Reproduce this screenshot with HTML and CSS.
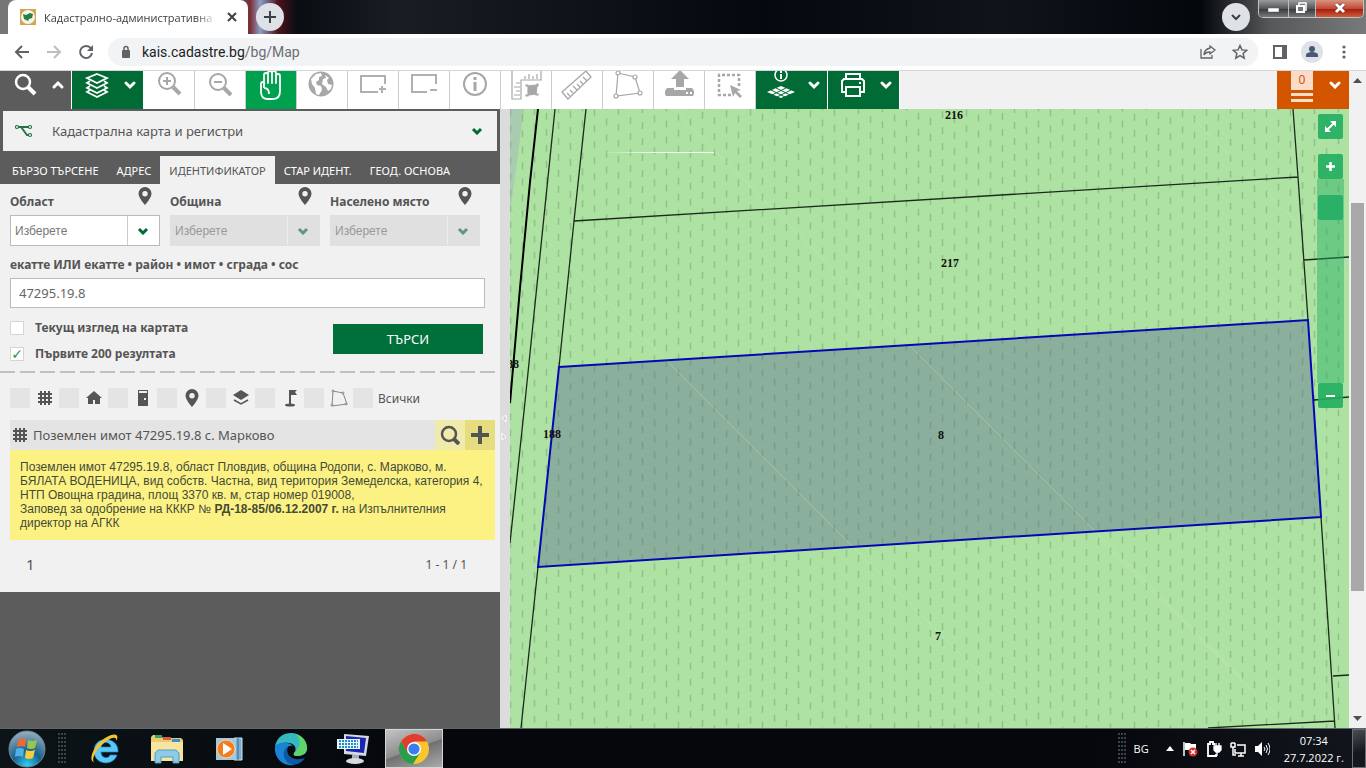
FILE: index.html
```html
<!DOCTYPE html>
<html lang="bg">
<head>
    <meta charset="UTF-8">
    <meta name="viewport" content="width=device-width, initial-scale=1.0">
    <title>Кадастрално-административна</title>
    <link rel="stylesheet" href="styles.css">
</head>
<body>
    <!-- browser tabs -->
    <div class="tab-strip">
        <div class="browser-tab">
            <svg width="16" height="16" viewBox="0 0 16 16"><rect width="16" height="16" fill="#d3a550"/><circle cx="8" cy="8" r="7" fill="#f4f3ea"/><path d="M3 5l3 1 4-2 3 1-1 4-3 1-1 2-4-2z" fill="#24813f"/></svg>
            <span class="tab-title">Кадастрално-административна</span>
            <button class="tab-close" aria-label="Затвори раздела"><svg width="10" height="10" viewBox="0 0 10 10"><path d="M1 1l8 8M9 1l-8 8" stroke="#3c4043" stroke-width="2"/></svg></button>
        </div>
        <button class="round-button" aria-label="Нов раздел"><svg width="14" height="14" viewBox="0 0 14 14"><path d="M7 1v12M1 7h12" stroke="#3c4043" stroke-width="2"/></svg></button>
        <button class="round-button tab-search" aria-label="Търсене в разделите"><svg width="12" height="12" viewBox="0 0 12 12"><path d="M2 4l4 4 4-4" fill="none" stroke="#3c4043" stroke-width="2"/></svg></button>
        <div class="window-controls">
            <button aria-label="Минимизиране"><svg width="29" height="17" viewBox="0 0 29 17"><rect x="9" y="8" width="11" height="4" fill="#fff" stroke="#555" stroke-width=".5"/></svg></button>
            <button aria-label="Възстановяване"><svg width="26" height="17" viewBox="0 0 26 17"><path d="M10 5V3h7v7h-2" fill="none" stroke="#fff" stroke-width="1.5"/><rect x="8" y="6" width="7" height="6" fill="#777" stroke="#fff" stroke-width="2"/></svg></button>
            <button class="window-close" aria-label="Затваряне"><svg width="47" height="17" viewBox="0 0 47 17"><path d="M20 4l8 8M28 4l-8 8" stroke="#622" stroke-width="4"/><path d="M20 4l8 8M28 4l-8 8" stroke="#fff" stroke-width="3"/></svg></button>
        </div>
    </div>

    <!-- address bar -->
    <div class="address-bar">
        <button class="nav-button" aria-label="Назад"><svg width="16" height="16" viewBox="0 0 16 16"><path d="M15 8H2M8 2L2 8l6 6" fill="none" stroke="#5f6368" stroke-width="2"/></svg></button>
        <button class="nav-button" aria-label="Напред"><svg width="16" height="16" viewBox="0 0 16 16"><path d="M1 8h13M8 2l6 6-6 6" fill="none" stroke="#bcbec1" stroke-width="2"/></svg></button>
        <button class="nav-button" aria-label="Презареждане"><svg width="16" height="16" viewBox="0 0 16 16"><path d="M13 4.500A6 6 0 1 0 14 9" fill="none" stroke="#5f6368" stroke-width="2"/><path d="M15 1v6H9z" fill="#5f6368"/></svg></button>
        <div class="omnibox">
            <svg width="12" height="14" viewBox="0 0 12 14"><rect x="2" y="5" width="8" height="8" rx="1" fill="#5f6368"/><path d="M4 6V3.500a2 2 0 0 1 4 0V6" fill="none" stroke="#5f6368" stroke-width="1.500"/></svg>
            <span class="url">kais.cadastre.bg<span class="url-path">/bg/Map</span></span>
            <button class="nav-button" aria-label="Споделяне"><svg width="16" height="16" viewBox="0 0 16 16"><path d="M1 5v9h11v-3M10 2l5 4-5 4V8c-3 0-5 1-6 3 0-4 2-6 6-7z" fill="none" stroke="#5f6368" stroke-width="1.300"/></svg></button>
            <button class="nav-button" aria-label="Отметка"><svg width="16" height="16" viewBox="0 0 16 16"><path d="M8 1.500l1.900 4.400 4.800.4-3.600 3.200 1.100 4.700L8 11.700l-4.200 2.500 1.100-4.700L1.300 6.300l4.800-.4z" fill="none" stroke="#5f6368" stroke-width="1.500"/></svg></button>
        </div>
        <button class="nav-button" aria-label="Страничен панел"><svg width="14" height="14" viewBox="0 0 14 14"><rect x="1" y="1" width="12" height="12" fill="#fff" stroke="#5f6368" stroke-width="2"/><rect x="9" y="1" width="4" height="12" fill="#5f6368"/></svg></button>
        <button class="nav-button" aria-label="Профил"><svg width="22" height="22" viewBox="0 0 22 22"><circle cx="11" cy="11" r="11" fill="#dee1e6"/><circle cx="11" cy="8" r="3" fill="#4a5878"/><path d="M5 16v-2c0-4 12-4 12 0v2z" fill="#4a5878"/></svg></button>
        <button class="nav-button" aria-label="Меню"><svg width="4" height="14" viewBox="0 0 4 14" fill="#5f6368"><circle cx="2" cy="2" r="1.600"/><circle cx="2" cy="7" r="1.600"/><circle cx="2" cy="12" r="1.600"/></svg></button>
    </div>

    <div class="page">
        <div class="app">
            <div class="toolbar">
                <button class="tool tool-search" aria-label="Търсене"><svg width="71" height="38" viewBox="0 0 71 38" fill="none" stroke="#fff"><circle cx="23" cy="11" r="7" stroke-width="2.500"/><path d="M28 16l7 7" stroke-width="4"/><path d="M54 16l4-4 4 4" stroke-width="3" stroke-linecap="round"/></svg></button>
                <button class="tool tool-green" aria-label="Слоеве"><svg width="71" height="38" viewBox="0 0 71 38" fill="none" stroke="#fff" stroke-width="1.800"><path d="M25 3l10 4-10 5-10-5z"/><path d="M18 10l-3 2 10 5 10-5-3-2M18 15l-3 2 10 5 10-5-3-2M18 19l-3 2 10 5 10-5-3-2"/><path d="M54 12l4 4 4-4" stroke-width="3" stroke-linecap="round"/></svg></button>
                <button class="tool" aria-label="Приближаване"><svg width="50" height="38" viewBox="0 0 50 38" fill="none" stroke="#a7a7a7"><circle cx="23" cy="10" r="8" stroke-width="2"/><path d="M23 6v8M19 10h8" stroke-width="2"/><path d="M29 16l7 7" stroke-width="4"/></svg></button>
                <button class="tool" aria-label="Отдалечаване"><svg width="50" height="38" viewBox="0 0 50 38" fill="none" stroke="#a7a7a7"><circle cx="23" cy="11" r="8" stroke-width="2"/><path d="M19 11h8" stroke-width="2"/><path d="M29 17l7 7" stroke-width="4"/></svg></button>
                <button class="tool tool-active" aria-label="Преместване"><svg width="50" height="38" viewBox="0 0 50 38" fill="none" stroke="#fff" stroke-width="1.800" stroke-linejoin="round"><path d="M18 17V4q0-2 2-2t2 2v8V2q0-2 2-2t2 2v10V2q0-2 2-2t2 2v10V5q0-2 2-2t2 2v15q0 8-7 8h-5q-7 0-7-7v-8q0-2 2-2t1 3M18 17q5 0 5 6"/></svg></button>
                <button class="tool" aria-label="Цялата карта"><svg width="50" height="38" viewBox="0 0 50 38"><circle cx="24" cy="13" r="12.500" fill="#a7a7a7"/><path d="M14 8l5-5 5-1 1 3-3 1v3l-3 2 1 3 4 1 1 4-3 5-3-1-1-6-3-4zM28 4l4 3-2 2 1 4 4 1-1 4-3 2-2-4-4-3 1-5 3-1z" fill="#fff"/></svg></button>
                <button class="tool" aria-label="Рамка за приближаване"><svg width="50" height="38" viewBox="0 0 50 38" fill="none" stroke="#b0b0b0"><path d="M30 21H13V5h24v8" stroke-width="2"/><path d="M34 15v7M31 18h7" stroke-width="2"/></svg></button>
                <button class="tool" aria-label="Рамка за отдалечаване"><svg width="50" height="38" viewBox="0 0 50 38" fill="none" stroke="#b0b0b0" stroke-width="2"><path d="M28 21H13V4h24v9M31 19h7"/></svg></button>
                <button class="tool" aria-label="Информация"><svg width="50" height="38" viewBox="0 0 50 38"><circle cx="25" cy="13" r="11" fill="none" stroke="#a7a7a7" stroke-width="2"/><path d="M25 6v3M25 11v9" stroke="#a7a7a7" stroke-width="3"/></svg></button>
                <button class="tool" aria-label="Мащабно измерване"><svg width="50" height="38" viewBox="0 0 50 38" fill="none" stroke="#a7a7a7" stroke-width="1.200"><path d="M11-1h29v10H20v19h-9z"/><path d="M24 8V5M28 8V3M32 8V5M36 8V3M19 12h-4M19 16h-6M19 20h-4M19 24h-6"/><path d="M27 15l9-1-1 9-8 1z" fill="#a7a7a7"/><path d="M25 14h2v1h-2zM36 13h1v2h-1zM35 23h2v1h-2zM25 24h2v1h-2z"/></svg></button>
                <button class="tool" aria-label="Измерване на разстояние"><svg width="50" height="38" viewBox="0 0 50 38" fill="none" stroke="#a7a7a7" stroke-width="1.300"><path d="M10 21L34 0l5 6-23 22z"/><path d="M18 25l-3-3M21 22l-3-3M25 19l-4-4M28 16l-3-3M31 13l-3-3M35 10l-4-4"/></svg></button>
                <button class="tool" aria-label="Измерване на площ"><svg width="50" height="38" viewBox="0 0 50 38" fill="#fff" stroke="#a7a7a7" stroke-width="1.200"><path d="M15 2l17 4 5 16-24 3z"/><circle cx="15" cy="2" r="2"/><circle cx="32" cy="6" r="2"/><circle cx="37" cy="22" r="2"/><circle cx="13" cy="25" r="2"/></svg></button>
                <button class="tool" aria-label="Качване на файл"><svg width="50" height="38" viewBox="0 0 50 38" fill="#a7a7a7"><path d="M26-1l9 9h-5v8h-8V8h-5zM13 17h7v2h12v-2h6l2 3v3l-1 2H12l-1-2v-3z"/><path d="M32 21h2v2h-2zM36 21h2v2h-2z" fill="#fff"/></svg></button>
                <button class="tool" aria-label="Избор на обекти"><svg width="50" height="38" viewBox="0 0 50 38"><path d="M26 24H14V4h20v11" fill="none" stroke="#a7a7a7" stroke-width="2.500" stroke-dasharray="3 2"/><path d="M25 14l11 5-4 1 5 5-2 2-5-5-2 4z" fill="#a7a7a7"/></svg></button>
                <button class="tool tool-green" aria-label="Информация за слоеве"><svg width="71" height="38" viewBox="0 0 71 38" fill="none" stroke="#fff"><circle cx="25" cy="4" r="6" stroke-width="1.500"/><path d="M25 0v2M25 3v5" stroke-width="2"/><path d="M25 15l14 6-14 6-14-6z" fill="#fff" stroke="none"/><path d="M20 17l14 7M15 19l14 7M30 17l-14 7M35 19l-14 7" stroke="#006b34"/><path d="M54 12l4 4 4-4" stroke-width="3" stroke-linecap="round"/></svg></button>
                <button class="tool tool-green" aria-label="Печат"><svg width="71" height="38" viewBox="0 0 71 38" fill="none" stroke="#fff" stroke-width="2"><path d="M18 8V3h14v5M18 21h-4V10l2-2h18l2 2v11h-4M18 16h14v9H18z"/><path d="M31 12h2"/><path d="M54 12l4 4 4-4" stroke-width="3" stroke-linecap="round"/></svg></button>
                <button class="tool-cart" aria-label="Заявки">
                    <span class="cart-lines"><span class="cart-count">0</span></span>
                    <svg width="12" height="8" viewBox="0 0 12 8"><path d="M2 2l4 4 4-4" fill="none" stroke="#fff" stroke-width="3" stroke-linecap="round"/></svg>
                </button>
            </div>

            <div class="main">
                <div class="panel">
                    <button class="register-picker">
                        <svg width="18" height="14" viewBox="0 0 18 14" fill="#fff" stroke="#1c7648" stroke-width="1.200"><path d="M3 3h3l6 8h3M6 3h9" fill="none" stroke-width="1.800"/><circle cx="2" cy="3" r="1.500"/><circle cx="15" cy="3" r="1.500"/><circle cx="15" cy="11" r="1.500"/></svg>
                        <span>Кадастрална карта и регистри</span>
                        <svg width="12" height="8" viewBox="0 0 12 8"><path d="M2 2l4 4 4-4" fill="none" stroke="#006b34" stroke-width="3"/></svg>
                    </button>
                    <div class="search-tabs">
                        <button>БЪРЗО ТЪРСЕНЕ</button>
                        <button>АДРЕС</button>
                        <button class="selected">ИДЕНТИФИКАТОР</button>
                        <button>СТАР ИДЕНТ.</button>
                        <button>ГЕОД. ОСНОВА</button>
                    </div>

                    <form class="search-form">
                        <div class="places">
                            <div class="place">
                                <label for="region">Област</label>
                                <svg class="pin" width="14" height="19" viewBox="0 0 14 19"><path d="M7 0a6.500 6.500 0 0 1 6.500 6.500C13.500 11 7 18 7 18S.5 11 .5 6.500A6.500 6.500 0 0 1 7 0zm0 4a2.700 2.700 0 1 0 0 5.400A2.700 2.700 0 0 0 7 4z" fill="#555"/></svg>
                                <div class="dropdown"><select id="region"><option>Изберете</option></select><svg width="12" height="8" viewBox="0 0 12 8"><path d="M2 2l4 4 4-4" fill="none" stroke="#006b34" stroke-width="3"/></svg></div>
                            </div>
                            <div class="place">
                                <label for="municipality">Община</label>
                                <svg class="pin" width="14" height="19" viewBox="0 0 14 19"><path d="M7 0a6.500 6.500 0 0 1 6.500 6.500C13.500 11 7 18 7 18S.5 11 .5 6.500A6.500 6.500 0 0 1 7 0zm0 4a2.700 2.700 0 1 0 0 5.400A2.700 2.700 0 0 0 7 4z" fill="#555"/></svg>
                                <div class="dropdown disabled"><select id="municipality" disabled><option>Изберете</option></select><svg width="12" height="8" viewBox="0 0 12 8"><path d="M2 2l4 4 4-4" fill="none" stroke="#5a9a78" stroke-width="3"/></svg></div>
                            </div>
                            <div class="place">
                                <label for="settlement">Населено място</label>
                                <svg class="pin" width="14" height="19" viewBox="0 0 14 19"><path d="M7 0a6.500 6.500 0 0 1 6.500 6.500C13.500 11 7 18 7 18S.5 11 .5 6.500A6.500 6.500 0 0 1 7 0zm0 4a2.700 2.700 0 1 0 0 5.400A2.700 2.700 0 0 0 7 4z" fill="#555"/></svg>
                                <div class="dropdown disabled"><select id="settlement" disabled><option>Изберете</option></select><svg width="12" height="8" viewBox="0 0 12 8"><path d="M2 2l4 4 4-4" fill="none" stroke="#5a9a78" stroke-width="3"/></svg></div>
                            </div>
                        </div>
                        <label class="number-label" for="number">екатте ИЛИ екатте • район • имот • сграда • сос</label>
                        <input class="number" type="text" id="number" value="47295.19.8">
                        <div class="submit-row">
                            <div class="checks">
                                <label><input type="checkbox"> Текущ изглед на картата</label>
                                <label><input type="checkbox" checked> Първите 200 резултата</label>
                            </div>
                            <button class="search-button" type="button">ТЪРСИ</button>
                        </div>
                    </form>

                    <div class="results">
                        <div class="filters">
                            <label class="filter"><input type="checkbox" aria-label="Имоти"><svg width="16" height="16" viewBox="0 0 16 16"><path d="M4 1v14M8 1v14M12 1v14M1 4h14M1 8h14M1 12h14" stroke="#555" stroke-width="2"/></svg></label>
                            <label class="filter"><input type="checkbox" aria-label="Сгради"><svg width="16" height="16" viewBox="0 0 16 16"><path d="M8 1l8 7h-2v6H9v-4H7v4H2V8H0z" fill="#555"/></svg></label>
                            <label class="filter"><input type="checkbox" aria-label="Самостоятелни обекти"><svg width="16" height="16" viewBox="0 0 16 16"><path d="M3 0h10v16H3z" fill="#555"/><path d="M4 1h8v2H4zM9 8h2v2H9z" fill="#eee"/></svg></label>
                            <label class="filter"><input type="checkbox" aria-label="Адреси"><svg width="14" height="19" viewBox="0 0 14 19"><path d="M7 0a6.500 6.500 0 0 1 6.500 6.500C13.500 11 7 18 7 18S.5 11 .5 6.500A6.500 6.500 0 0 1 7 0zm0 4a2.700 2.700 0 1 0 0 5.400A2.700 2.700 0 0 0 7 4z" fill="#555"/></svg></label>
                            <label class="filter"><input type="checkbox" aria-label="Слоеве"><svg width="16" height="16" viewBox="0 0 16 16"><path d="M8 0l8 5-8 5-8-5z" fill="#555"/><path d="M1 10l7 4 7-4" fill="none" stroke="#555" stroke-width="1.500"/></svg></label>
                            <label class="filter"><input type="checkbox" aria-label="Геодезически точки"><svg width="16" height="18" viewBox="0 0 16 18"><path d="M8 17V1" stroke="#555" stroke-width="2"/><path d="M8 1h7l-2 2 2 3H8z" fill="#555"/><ellipse cx="8" cy="16" rx="5" ry="1.500" fill="#555"/></svg></label>
                            <label class="filter"><input type="checkbox" aria-label="Граници"><svg width="18" height="18" viewBox="0 0 18 18" fill="#f1f1f1" stroke="#888"><path d="M3 2l10 2 4 11-15 2z"/><circle cx="3" cy="2" r="1"/><circle cx="13" cy="4" r="1"/><circle cx="16" cy="15" r="1"/><circle cx="2" cy="16" r="1"/></svg></label>
                            <label class="filter-all"><input type="checkbox"> Всички</label>
                        </div>
                        <div class="result-head">
                            <svg width="16" height="16" viewBox="0 0 16 16"><path d="M4 1v14M8 1v14M12 1v14M1 4h14M1 8h14M1 12h14" stroke="#555" stroke-width="2"/></svg>
                            <span>Поземлен имот 47295.19.8 с. Марково</span>
                            <button class="result-zoom" aria-label="Покажи на картата"><svg width="20" height="20" viewBox="0 0 20 20" fill="none" stroke="#555"><circle cx="9" cy="9" r="7" stroke-width="2.500"/><path d="M14 14l5 5" stroke-width="4"/></svg></button>
                            <button class="result-add" aria-label="Добави"><svg width="18" height="18" viewBox="0 0 18 18"><path d="M9 0v18M0 9h18" stroke="#555" stroke-width="4"/></svg></button>
                        </div>
                        <div class="result-text">
                            <p>Поземлен имот 47295.19.8, област Пловдив, община Родопи, с. Марково, м. БЯЛАТА ВОДЕНИЦА, вид собств. Частна, вид територия Земеделска, категория 4, НТП Овощна градина, площ 3370 кв. м, стар номер 019008,</p>
                            <p>Заповед за одобрение на КККР № <b>РД-18-85/06.12.2007 г.</b> на Изпълнителния директор на АГКК</p>
                        </div>
                        <div class="pager"><span class="pager-current">1</span><span>1 - 1 / 1</span></div>
                    </div>
                </div>

                <div class="splitter">
                    <svg width="6" height="30" viewBox="0 0 6 30" fill="#ccc" stroke="#fff"><path d="M5 2L1 5l4 4zM1 20l4 4-4 3z"/></svg>
                </div>

                <div class="map">
                    <svg class="map-drawing" viewBox="510 109 839 619" preserveAspectRatio="xMinYMin slice">
                        <defs>
                            <pattern id="meadow" width="24" height="16" patternUnits="userSpaceOnUse" patternTransform="skewY(-4)">
                                <path d="M6.500 1v7M18.500 7v7" stroke="#82b078" stroke-width="1"/>
                            </pattern>
                            <linearGradient id="fade"><stop offset="0" stop-color="#f2fbef" stop-opacity="0"/><stop offset=".5" stop-color="#f2fbef"/></linearGradient>
                        </defs>
                        <rect x="510" y="109" width="839" height="619" fill="#aee2a3"/>
                        <path d="M510 109h14l-14 104z" fill="#a9ccb0"/>
                        <rect x="510" y="109" width="839" height="619" fill="url(#meadow)"/>
                        <path d="M559 367L1308 320l13 197-783 50z" fill="#566390" fill-opacity=".4"/>
                        <path d="M673 109l570 570M510 204l500 500M1184 109l165 166M1100 540l180 178" stroke="#d6f2cf" stroke-opacity=".4" fill="none" stroke-width=".7"/>
                        <rect x="600" y="152" width="114" height="1" fill="url(#fade)"/>
                        <g fill="none" stroke="#1c2a1a" stroke-width="1.300">
                            <path d="M555 109l-30 293-15 141M586 109l-12 112-15 146M538 567l-17 161M574 221l724-44M1293 109l5 68 10 143M1321 517l14 211M1304 260l45-3M1314 400l35-3M1333 676l16-1M1208 728l127-7"/>
                        </g>
                        <path d="M538 109l-8 73-10 106-10 115" fill="none" stroke="#000" stroke-width="2"/>
                        <path d="M559 367L1308 320l13 197-783 50z" fill="none" stroke="#0507b4" stroke-width="2"/>
                        <g class="parcel-numbers" text-anchor="middle">
                            <text x="954" y="119">216</text>
                            <text x="950" y="267">217</text>
                            <text x="941" y="439">8</text>
                            <text x="938" y="640">7</text>
                            <text x="552" y="438">188</text>
                            <text x="510" y="368">188</text>
                        </g>
                    </svg>
                    <div class="map-controls">
                        <button class="map-button map-expand" aria-label="Цял екран"><svg width="13" height="13" viewBox="0 0 13 13"><path d="M3 10l7-7" stroke="#fff" stroke-width="2"/><path d="M6 1h6v6zM1 6v6h6z" fill="#fff"/></svg></button>
                        <button class="map-button" aria-label="Приближи"><svg width="9" height="9" viewBox="0 0 9 9"><path d="M4.500 0v9M0 4.500h9" stroke="#fff" stroke-width="2.500"/></svg></button>
                        <input class="zoom-slider" type="range" min="0" max="100" value="91" aria-label="Мащаб">
                        <button class="map-button" aria-label="Отдалечи"><svg width="9" height="9" viewBox="0 0 9 9"><path d="M0 5h9" stroke="#fff" stroke-width="2"/></svg></button>
                    </div>
                </div>
            </div>
        </div>
        <div class="scrollbar">
            <svg width="9" height="5" viewBox="0 0 9 5"><path d="M4.500 0L9 5H0z" fill="#505050"/></svg>
            <div class="scroll-thumb"></div>
            <svg width="9" height="5" viewBox="0 0 9 5"><path d="M4.500 5L0 0h9z" fill="#505050"/></svg>
        </div>
    </div>

    <div class="taskbar">
        <button class="start" aria-label="Старт">
            <svg width="38" height="38" viewBox="0 0 38 38"><defs><radialGradient id="orb" cx=".5" cy=".95" r=".9"><stop offset="0" stop-color="#2fd0f5"/><stop offset=".45" stop-color="#17608f"/><stop offset="1" stop-color="#8ea9b8"/></radialGradient></defs><circle cx="19" cy="19" r="18" fill="url(#orb)" stroke="#6a8796"/><path d="M10 10q4-3 8-1l-1 8q-4-2-8 0z" fill="#ee6a35"/><path d="M20 10q4 2 9 0l-2 8q-4 2-8 0z" fill="#96c94b"/><path d="M8 19q4-2 8 0l-1 8q-4-2-8 0z" fill="#4fb3e8"/><path d="M18 20q4 2 9 0l-2 8q-4 2-8 0z" fill="#fbcb3c"/></svg>
        </button>
        <div class="grip"></div>
        <div class="tasks">
            <button aria-label="Internet Explorer"><svg width="32" height="32" viewBox="0 0 32 32"><path d="M29 19H12c0 7 8 7 9 3h7c-4 12-23 10-23-4C5 2 30 3 29 19zM12 14h10c-1-6-9-6-10 0z" fill="#5cc8f5" stroke="#1d87c9" stroke-width=".7"/><path d="M5 29C-2 27 6 11 16 5s15-4 11 3c1-5-4-4-11 1C8 15 2 26 5 29z" fill="#f7c331"/></svg></button>
            <button aria-label="Файлове"><svg width="34" height="32" viewBox="0 0 34 32"><path d="M1 4l2-2h8l2 3h18l2 2v21H1z" fill="#e9cd72"/><path d="M5 2h7v3H5z" fill="#35a65b"/><path d="M13 4h8v3h-8z" fill="#dd5b40"/><path d="M22 6h8v3h-8z" fill="#3b8fd1"/><path d="M1 9h32v19H1z" fill="#f7e59f"/><path d="M5 30V20l3-3h18l3 3v10h-6v-6H11v6z" fill="#8fcbe6" stroke="#4b9cc4"/></svg></button>
            <button aria-label="Media Player"><svg width="30" height="30" viewBox="0 0 30 30"><path d="M20 4h8v22h-8z" fill="#7db0cf" stroke="#cde6f3"/><path d="M24 4v22" stroke="#2f7096"/><rect x="2" y="4" width="20" height="22" fill="#a4c9dd"/><circle cx="12" cy="15" r="9" fill="#f07f24" stroke="#fbd2a6"/><path d="M9 9l9 6-9 6z" fill="#fff"/></svg></button>
            <button aria-label="Edge"><svg width="34" height="34" viewBox="0 0 34 34"><path d="M1 15C2 7 8 1 17 1s16 7 16 15c0 6-5 8-10 8-3 0-4-1-3-3 3-3 2-9-5-10C9 10 3 12 1 15z" fill="#35b9c1"/><path d="M22 2c7 2 11 8 11 14 0 6-5 8-10 8-3 0-4-1-3-3 6-5 8-12 2-19z" fill="#5fd468"/><path d="M1 15c2-5 14-6 18-1-5-1-8 3-8 7 0 6 4 11 10 12C9 35 0 26 1 15z" fill="#1b83d6"/><path d="M14 15c-3 8 4 15 17 11-5 7-13 9-18 4-5-6-4-13 1-15z" fill="#0c59a4"/></svg></button>
            <button aria-label="Екранна клавиатура"><svg width="34" height="34" viewBox="0 0 34 34"><path d="M8 2l25 2-3 20-22-2z" fill="#d6d9e0"/><path d="M10 4l20 2-2 15-18-2z" fill="#1826b4"/><path d="M16 23h7v5h-7z" fill="#a7adb5"/><ellipse cx="19" cy="29" rx="9" ry="3" fill="#d8dadf"/><rect x="1" y="7" width="23" height="10" fill="#e7f4fc"/><path d="M3 9h19M3 12h19M3 15h19" stroke="#278cc5" stroke-width="2" stroke-dasharray="2 1"/></svg></button>
            <button class="task-active" aria-label="Chrome"><svg width="32" height="32" viewBox="0 0 32 32"><circle cx="16" cy="16" r="15" fill="#f9c62e"/><path d="M3 8.500C10-2 24-1 29 8.500H16l-7 11z" fill="#df3e31"/><path d="M3 8.500C-3 18 4 31 15 31l7-11-12 0z" fill="#2a9d4c"/><circle cx="16" cy="16" r="7" fill="#fff"/><circle cx="16" cy="16" r="5.600" fill="#3b7ded"/></svg></button>
        </div>
        <div class="grip"></div>
        <div class="tray">
            <span class="lang">BG</span>
            <svg width="8" height="5" viewBox="0 0 8 5"><path d="M4 0l4 5H0z" fill="#fff"/></svg>
            <svg width="16" height="16" viewBox="0 0 16 16"><path d="M2 1v14" stroke="#fff" stroke-width="1.500"/><path d="M3 2h5l1 1h5v7H8L7 9H3z" fill="#fff"/><circle cx="11" cy="11" r="4.500" fill="#d4302a"/><path d="M9 9l4 4M13 9l-4 4" stroke="#fff" stroke-width="1.500"/></svg>
            <svg width="16" height="16" viewBox="0 0 16 16" fill="none" stroke="#fff"><path d="M9 3H7V1H4v2H2v12h8v-2" stroke-width="1.800"/><path d="M8 5h7v4l-2 2h-3L8 9zM10 2v3M13 2v3M11 11v4" fill="#fff" stroke-width="1.300"/></svg>
            <svg width="16" height="16" viewBox="0 0 16 16" fill="none" stroke="#fff" stroke-width="1.500"><path d="M7 4h8v8H5V8M8 15h6M11 12v3M1 2v4h4V2M3 6v8h3M2 1v2M4 1v2"/></svg>
            <svg width="16" height="16" viewBox="0 0 16 16"><path d="M1 5h3l4-4v14l-4-4H1z" fill="#fff"/><path d="M10 6q2 2 0 4M12 4q3 4 0 8M14 2q4 6 0 12" fill="none" stroke="#fff"/></svg>
            <div class="clock"><span>07:34</span><span>27.7.2022 г.</span></div>
            <button class="show-desktop" aria-label="Показване на работния плот"></button>
        </div>
    </div>
</body>
</html>
```

FILE: styles.css
```css
* {
    box-sizing: border-box;
}
body {
    margin: 0;
    height: 100vh;
    display: flex;
    flex-direction: column;
    overflow: hidden;
    font-family: "Noto Sans", "Open Sans", sans-serif;
    font-size: 12px;
    color: #555;
}
button {
    border: none;
    background: none;
    padding: 0;
    font: inherit;
    color: inherit;
    cursor: pointer;
    display: flex;
    align-items: center;
    justify-content: center;
}
svg {
    display: block;
    flex: none;
}

/* browser window */
.tab-strip {
    height: 34px;
    flex: none;
    display: flex;
    align-items: flex-start;
    padding: 0 2px 0 8px;
    background: linear-gradient(90deg, #777 0, #555 240px, #7c2a35 250px, #8b9fc4 260px, #51121d 278px, #0a0d12 296px, #191c22 400px, #10141a 560px, #05080e 760px, #10141a 1000px, #03060b 1200px, #565859 1270px, #77797a 100%);
}
.browser-tab {
    width: 240px;
    height: 34px;
    background: #fff;
    border-radius: 8px 8px 0 0;
    display: flex;
    align-items: center;
    gap: 8px;
    padding: 0 9px 0 12px;
}
.tab-title {
    flex: 1;
    overflow: hidden;
    white-space: nowrap;
    color: #3c4043;
    font-family: "Open Sans", sans-serif;
    font-size: 11px;
    -webkit-mask-image: linear-gradient(90deg, #000 88%, transparent);
    mask-image: linear-gradient(90deg, #000 88%, transparent);
}
.tab-close {
    width: 14px;
    height: 14px;
}
.round-button {
    width: 28px;
    height: 28px;
    margin: 3px 8px;
    border-radius: 14px;
    background: #dee1e6;
}
.tab-search {
    margin-left: auto;
}
.window-controls {
    display: flex;
    border: 1px solid #c0c2c3;
    border-top: none;
    border-radius: 0 0 5px 5px;
    overflow: hidden;
}
.window-controls button {
    background: linear-gradient(#999b9c, #55585a 50%, #3a3d3f 55%, #77797a);
    border-right: 1px solid #bbb;
}
.window-controls .window-close {
    background: linear-gradient(#d9937f, #c04a34 50%, #a51f10 55%, #cf5d3b);
    border-right: none;
}
.address-bar {
    height: 37px;
    flex: none;
    display: flex;
    align-items: center;
    padding: 0 6px;
    background: #fff;
    border-bottom: 1px solid #d6d6d6;
}
.nav-button {
    width: 32px;
    height: 28px;
}
.omnibox {
    flex: 1;
    height: 28px;
    margin: 0 6px;
    padding: 0 2px 0 12px;
    border-radius: 14px;
    background: #f1f3f4;
    display: flex;
    align-items: center;
}
.url {
    flex: 1;
    margin-left: 10px;
    font-family: Roboto, "Open Sans", sans-serif;
    font-size: 14px;
    color: #202124;
}
.url-path {
    color: #6a6e73;
}
.page {
    flex: 1;
    min-height: 0;
    display: flex;
}
.app {
    flex: 1;
    min-width: 0;
    display: flex;
    flex-direction: column;
}
.scrollbar {
    width: 17px;
    background: #f1f1f1;
    display: flex;
    flex-direction: column;
    align-items: center;
    padding: 7px 0;
}
.scroll-thumb {
    width: 13px;
    flex: 0 1 388px;
    margin: 120px 0 auto;
    background: #a8a8a8;
}

/* map tools */
.toolbar {
    height: 38px;
    flex: none;
    display: flex;
    background: #f1f1f1;
}
.tool {
    background: #fff;
    border-right: 1px solid #ccc;
}
.tool-search {
    background: #5c5c5c;
    border-color: #fff;
}
.tool-green {
    background: #006b34;
    border-color: #fff;
}
.tool-active {
    background: #00a14e;
}
.tool-cart {
    width: 72px;
    margin-left: auto;
    padding: 0 8px 0 14px;
    background: #d45500;
    align-items: flex-start;
    justify-content: space-between;
}
.tool-cart svg {
    margin-top: 10px;
}
.cart-lines {
    width: 22px;
    height: 31px;
    border-bottom: 3px solid #fbdcc8;
}
.cart-count {
    display: block;
    height: 25px;
    border-bottom: 3px solid #fbdcc8;
    color: #d45500;
    line-height: 17px;
    background: linear-gradient(#fbdcc8 19px, transparent 19px);
}
.main {
    flex: 1;
    min-height: 0;
    display: flex;
}

/* search panel */
.panel {
    width: 500px;
    flex: none;
    background: #5c5c5c;
    padding-top: 2px;
}
.register-picker {
    width: calc(100% - 6px);
    height: 40px;
    margin: 0 3px;
    padding: 0 14px 0 12px;
    gap: 19px;
    background: #f1f1f1;
    font-size: 13px;
}
.register-picker span {
    flex: 1;
    text-align: left;
}
.search-tabs {
    height: 33px;
    padding: 5px 0 0 3px;
    display: flex;
}
.search-tabs button {
    padding: 0 9px;
    color: #fff;
    font-size: 11px;
}
.search-tabs .selected {
    background: #f1f1f1;
    color: #555;
}
.search-form {
    background: #f1f1f1;
    padding: 2px 15px 0 10px;
}
.search-form label {
    font-size: 12px;
    line-height: 16px;
    font-weight: bold;
}
.places {
    display: flex;
    gap: 10px;
}
.place {
    width: 150px;
    display: flex;
    flex-wrap: wrap;
    justify-content: space-between;
}
.place label {
    margin-top: 8px;
}
.pin {
    margin: 1px 8px 9px 0;
}
.dropdown {
    position: relative;
    width: 100%;
    height: 31px;
}
.dropdown select {
    width: 100%;
    height: 31px;
    padding: 0 4px;
    appearance: none;
    border: 1px solid #bbb;
    border-radius: 0;
    background: linear-gradient(#ccc, #ccc) 116px 0 / 1px 100% no-repeat #fff;
    font-family: "Liberation Sans", Arial, sans-serif;
    font-size: 12px;
    color: #777;
    opacity: 1;
}
.dropdown.disabled select {
    border-color: #e0e0e0;
    background: linear-gradient(#eee, #eee) 116px 0 / 1px 100% no-repeat #e0e0e0;
    color: #999;
}
.dropdown svg {
    position: absolute;
    right: 11px;
    top: 12px;
    pointer-events: none;
}
.search-form .number-label {
    display: block;
    padding: 11px 0 5px;
}
.number {
    display: block;
    width: 100%;
    height: 30px;
    padding: 0 8px;
    border: 1px solid #bbb;
    font-family: inherit;
    font-size: 13px;
    color: #666;
}
.submit-row {
    display: flex;
    justify-content: space-between;
    align-items: flex-start;
    padding: 0 2px 9px 0;
}
.checks {
    display: flex;
    flex-direction: column;
    gap: 10px;
    padding-top: 12px;
}
.checks label {
    display: flex;
    align-items: center;
    gap: 11px;
}
.checks input {
    appearance: none;
    width: 14px;
    height: 14px;
    margin: 0;
    border: 1px solid #d5d5d5;
    background: #fff;
    display: grid;
    place-items: center;
}
.checks input:checked::before {
    content: "✓";
    font: bold 14px/12px "DejaVu Sans", sans-serif;
    color: #2f9158;
}
.search-button {
    width: 150px;
    height: 30px;
    margin-top: 16px;
    background: #00703a;
    color: #fff;
    font-size: 13px;
}

/* results */
.results {
    background: #f1f1f1;
    padding: 17px 5px 17px 10px;
    background-image: repeating-linear-gradient(90deg, #c0c0c0 0, #c0c0c0 15px, transparent 15px, transparent 20px);
    background-size: 100% 2px;
    background-repeat: no-repeat;
}
.filters {
    display: flex;
    height: 20px;
}
.filter, .filter-all {
    width: 49px;
    display: flex;
    align-items: center;
}
.filter-all {
    width: auto;
    gap: 5px;
    font-size: 12px;
}
.filter svg {
    margin: 0 auto;
}
.filters input {
    appearance: none;
    width: 20px;
    height: 20px;
    margin: 0;
    background: #e4e4e4;
}
.result-head {
    height: 30px;
    margin-top: 12px;
    padding-left: 2px;
    display: flex;
    align-items: center;
    gap: 5px;
    background: #e4e4e4;
    font-size: 13px;
}
.result-head span {
    flex: 1;
}
.result-head button {
    width: 30px;
    height: 30px;
}
.result-zoom {
    background: #f0ebac;
}
.result-add {
    margin-left: -5px;
    background: #e6de7e;
}
.result-text {
    padding: 10px;
    background: #fcf283;
    color: #444a38;
    font-family: "Liberation Sans", Arial, sans-serif;
    font-size: 12px;
    line-height: 14px;
}
.result-text p {
    margin: 0;
}
.pager {
    display: flex;
    justify-content: space-between;
    align-items: center;
    padding: 14px 28px 0 16px;
}
.pager-current {
    font-size: 15px;
    line-height: 21px;
}
.splitter {
    width: 10px;
    flex: none;
    background: #dcdcdc;
    padding: 304px 0 0 1px;
}

/* map */
.map {
    flex: 1;
    min-width: 0;
    position: relative;
    overflow: hidden;
    background: #aee2a3;
}
.map-drawing {
    width: 100%;
    height: 100%;
}
.parcel-numbers {
    font-family: "Liberation Serif", serif;
    font-size: 12px;
    font-weight: bold;
    fill: #111;
}
.map-controls {
    position: absolute;
    top: 5px;
    right: 5px;
    display: flex;
    flex-direction: column;
    align-items: center;
}
.map-button {
    width: 25px;
    height: 25px;
    border-radius: 2px;
    background: rgba(32, 174, 96, 0.9);
}
.map-expand {
    margin-bottom: 15px;
}
.zoom-slider {
    appearance: none;
    writing-mode: vertical-lr;
    direction: rtl;
    width: 27px;
    height: 204px;
    margin: 0;
    background: rgba(32, 174, 96, 0.45);
}
.zoom-slider::-webkit-slider-thumb {
    appearance: none;
    width: 25px;
    height: 25px;
    border-radius: 2px;
    background: #2bb067;
}

/* windows taskbar */
.taskbar {
    height: 40px;
    flex: none;
    display: flex;
    align-items: center;
    border-top: 1px solid #5d666b;
    background: linear-gradient(90deg, #0c1418, #05070c 30%, #05070c 80%, #12161c);
    color: #fff;
}
.start {
    margin-left: 8px;
}
.grip {
    width: 8px;
    height: 32px;
    margin-left: 12px;
    background: radial-gradient(circle at 1px 1px, #3c4246 1px, transparent 1px) 0 0 / 3px 4px;
}
.tasks {
    display: flex;
    gap: 2px;
    margin: 0 auto 0 9px;
}
.tasks button {
    width: 60px;
    height: 39px;
}
.tasks .task-active {
    width: 58px;
    border: 1px solid #d5d5d5;
    background: linear-gradient(160deg, #c4c4c4, #8d8d8d 50%, #707070 52%, #aaa);
}
.tray {
    display: flex;
    align-items: center;
    height: 100%;
    gap: 8px;
    padding-left: 8px;
    font-family: "Open Sans", sans-serif;
    font-size: 11px;
}
.lang {
    margin-right: 9px;
}
.clock {
    display: flex;
    flex-direction: column;
    align-items: center;
    line-height: 17px;
    margin-left: 6px;
}
.show-desktop {
    width: 14px;
    height: 100%;
    border: 1px solid #6a6f73;
    background: linear-gradient(160deg, #4a4e52, #15181c 60%);
}
```
